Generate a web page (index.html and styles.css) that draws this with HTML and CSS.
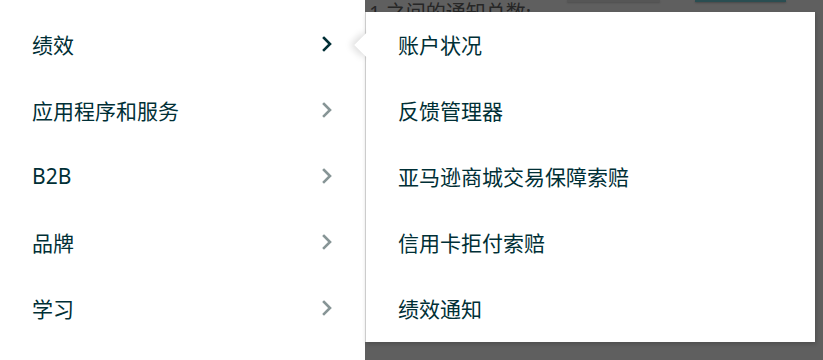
FILE: index.html
```html
<!DOCTYPE html>
<html lang="zh-CN">
<head>
<meta charset="utf-8">
<title>菜单</title>
<link rel="stylesheet" href="styles.css">
</head>
<body>
<div class="page">
  <div class="toolbar">
    <span class="btn btn-secondary"></span>
    <span class="btn btn-primary"></span>
  </div>
  <div class="notice">1 之间的通知总数:</div>
</div>

<nav class="flyout">
  <ul class="menu">
    <li class="menu-item active"><span>绩效</span><svg class="chev" viewBox="0 0 10 16"><path d="M2 2 L8 8 L2 14"/></svg></li>
    <li class="menu-item"><span>应用程序和服务</span><svg class="chev" viewBox="0 0 10 16"><path d="M2 2 L8 8 L2 14"/></svg></li>
    <li class="menu-item"><span>B2B</span><svg class="chev" viewBox="0 0 10 16"><path d="M2 2 L8 8 L2 14"/></svg></li>
    <li class="menu-item"><span>品牌</span><svg class="chev" viewBox="0 0 10 16"><path d="M2 2 L8 8 L2 14"/></svg></li>
    <li class="menu-item"><span>学习</span><svg class="chev" viewBox="0 0 10 16"><path d="M2 2 L8 8 L2 14"/></svg></li>
  </ul>
  <div class="submenu">
    <div class="pointer"><span class="pointer-tip"></span></div>
    <ul class="sub-list">
      <li class="sub-item">账户状况</li>
      <li class="sub-item">反馈管理器</li>
      <li class="sub-item">亚马逊商城交易保障索赔</li>
      <li class="sub-item">信用卡拒付索赔</li>
      <li class="sub-item">绩效通知</li>
    </ul>
  </div>
</nav>
</body>
</html>
```

FILE: styles.css
```css
* { box-sizing: border-box; }
html, body {
  margin: 0;
  padding: 0;
  width: 823px;
  height: 360px;
  overflow: hidden;
  font-family: "Noto Sans", "Noto Sans CJK SC", sans-serif;
}
ul { list-style: none; margin: 0; padding: 0; }

/* page behind the overlay, already dimmed */
.page {
  position: relative;
  height: 360px;
  background: #5f5f5f;
}
.toolbar {
  display: flex;
  gap: 35px;
  padding-left: 567px;
  height: 2px;
}
.btn {
  display: block;
  height: 2px;
}
.btn-secondary {
  width: 93px;
  background: #565656;
  box-shadow: 0 1px 2px rgba(0,0,0,0.18);
}
.btn-primary {
  width: 91px;
  background: #2a4e52;
  box-shadow: 0 1px 2px rgba(0,0,0,0.25);
}
.notice {
  margin: 1px 0 0 369px;
  font-size: 20px;
  line-height: 20px;
  color: #262626;
  white-space: nowrap;
}

/* flyout overlay */
.flyout {
  position: absolute;
  top: 0;
  left: 0;
  display: flex;
  align-items: flex-start;
  height: 360px;
}
.menu {
  width: 365px;
  height: 360px;
  background: #ffffff;
  padding-top: 12px;
}
.menu-item {
  display: flex;
  align-items: center;
  justify-content: space-between;
  height: 66px;
  padding: 0 33px 3px 32px;
  font-size: 21px;
  color: #002f36;
}
.chev {
  width: 10px;
  height: 16px;
  fill: none;
  stroke: #879596;
  stroke-width: 2.6;
  stroke-linecap: square;
  stroke-linejoin: miter;
}
.menu-item.active .chev { stroke: #002f36; }

.submenu {
  position: relative;
  margin-top: 12px;
  width: 450px;
  height: 330px;
  background: #ffffff;
  border-left: 1px solid #cccccc;
  box-shadow: 1px 2px 4px rgba(0,0,0,0.18);
}
.pointer {
  position: absolute;
  left: -27px;
  top: 11px;
  width: 28px;
  height: 44px;
  overflow: hidden;
}
.pointer-tip {
  position: absolute;
  left: 19px;
  top: 13px;
  width: 18px;
  height: 18px;
  background: #ffffff;
  transform: rotate(45deg);
  box-shadow: -3px 3px 7px rgba(0,0,0,0.13);
}
.sub-item {
  display: flex;
  align-items: center;
  height: 66px;
  padding: 0 0 3px 32px;
  font-size: 21px;
  color: #002f36;
  white-space: nowrap;
}
```
